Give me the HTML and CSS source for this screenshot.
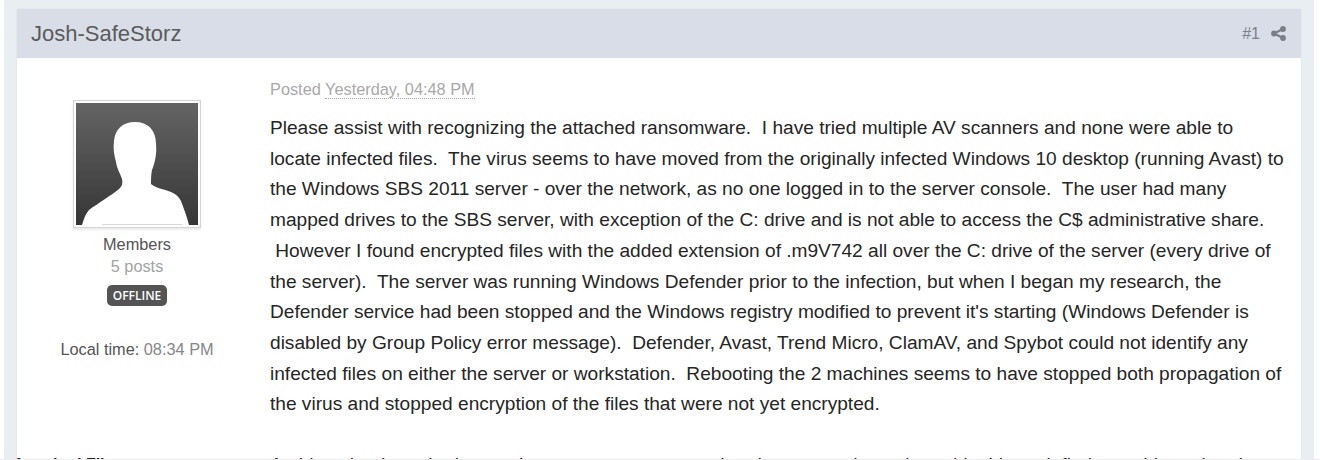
FILE: index.html
```html
<!DOCTYPE html>
<html lang="en">
<head>
<meta charset="utf-8">
<title>Josh-SafeStorz</title>
<link rel="stylesheet" href="styles.css">
</head>
<body>
<div class="page">
  <article class="post">
    <header class="post-head">
      <h3 class="author">Josh-SafeStorz</h3>
      <div class="post-tools">
        <span class="post-num">#1</span>
        <svg class="share" viewBox="0 0 16 16" aria-hidden="true"><circle cx="12.8" cy="3.2" r="3.1"/><circle cx="3.2" cy="8" r="3.1"/><circle cx="12.8" cy="12.8" r="3.1"/><path d="M3.2 8L12.8 3.2M3.2 8l9.6 4.8" class="share-line"/></svg>
      </div>
    </header>
    <div class="post-body">
      <aside class="member">
        <div class="avatar">
          <svg viewBox="0 0 122 122" aria-hidden="true">
            <defs><linearGradient id="ag" x1="0" y1="0" x2="0" y2="1"><stop offset="0" stop-color="#646464"/><stop offset="1" stop-color="#363636"/></linearGradient></defs>
            <rect width="122" height="122" fill="url(#ag)"/>
            <path d="M6 122C8 115 10 110 13 107C18 103 22 101 26 98C33 93 40 89 44 85C46 83 47 80 46 76C44 70 41 66 40 59C38 52 37 45 38 38C39 26 47 19 59 19C72 19 80 27 80 41C81 50 79 60 76 67C75 72 75 76 75 81C79 85 88 86 95 89C100 91 103 94 105 98C108 106 111 114 113 122Z" fill="#fff"/>
            <path d="M26 121.5H106" stroke="#d8d8d8" stroke-width="1"/>
          </svg>
        </div>
        <div class="group">Members</div>
        <div class="posts">5 posts</div>
        <span class="badge">OFFLINE</span>
        <div class="local">Local time: <span class="local-val">08:34 PM</span></div>
      </aside>
      <div class="content">
        <div class="posted">Posted <span class="posted-time">Yesterday, 04:48 PM</span></div>
        <p class="para">Please assist with recognizing the attached ransomware.&nbsp; I have tried multiple AV scanners and none were able to locate infected files.&nbsp; The virus seems to have moved from the originally infected Windows 10 desktop (running Avast) to the Windows SBS 2011 server - over the network, as no one logged in to the server console.&nbsp; The user had many mapped drives to the SBS server, with exception of the C: drive and is not able to access the C$ administrative share. &nbsp;However I found encrypted files with the added extension of .m9V742 all over the C: drive of the server (every drive of the server).&nbsp; The server was running Windows Defender prior to the infection, but when I began my research, the Defender service had been stopped and the Windows registry modified to prevent it's starting (Windows Defender is disabled by Group Policy error message).&nbsp; Defender, Avast, Trend Micro, ClamAV, and Spybot could not identify any infected files on either the server or workstation.&nbsp; Rebooting the 2 machines seems to have stopped both propagation of the virus and stopped encryption of the files that were not yet encrypted.</p>
        <p class="para next">At this point, I am the hunter. I want to try a program that the ransom host about this, I hope it finds anything related to</p>
      </div>
    </div>
  </article>
  <div class="cut-label">Attached Files</div>
</div>
<div class="bottom-line"></div>
</body>
</html>
```
FILE: styles.css
```css
html, body { margin: 0; padding: 0; background: #fff; }
body { height: 460px; overflow: hidden; font-family: "Liberation Sans", Arial, sans-serif; }
.page { position: relative; margin-left: 4px; width: 1310px; height: 459px; box-sizing: border-box; padding: 9px 13px 0; background: #e9eef3; overflow: hidden; }
.bottom-line { height: 1px; background: #eeeeee; }
.post { background: #fff; height: 600px; box-shadow: 0 0 1px rgba(0,0,0,.12); }
.post-head { display: flex; justify-content: space-between; align-items: center; height: 49px; box-sizing: border-box; padding: 0 15px 0 14px; background: #d8dde8; }
.author { margin: 0; font-size: 22px; font-weight: 400; color: #5b5b5b; }
.post-tools { display: flex; align-items: center; gap: 11px; }
.post-num { font-size: 16px; color: #7b8089; }
.share { width: 15px; height: 15px; fill: #7a7f87; }
.share-line { stroke: #7a7f87; stroke-width: 2.2; fill: none; }
.post-body { display: flex; }
.member { width: 240px; flex: none; display: flex; flex-direction: column; align-items: center; padding-top: 42px; font-size: 16.32px; line-height: 22px; }
.avatar { width: 122px; height: 122px; padding: 2px; border: 1px solid #d5d5d5; background: #fff; box-shadow: 0 2px 2px rgba(0,0,0,.08); margin-bottom: 5px; }
.avatar svg { display: block; width: 122px; height: 122px; }
.group { color: #555; }
.posts { color: #a3a3a3; }
.badge { margin-top: 8px; padding: 0 6px; height: 21px; line-height: 21px; border-radius: 5px; background: #545454; color: #fff; font-family: "Open Sans", "Liberation Sans", sans-serif; font-size: 12px; font-weight: 600; }
.local { margin-top: 32px; color: #555; }
.local-val { color: #85878a; }
.content { flex: 1; padding: 21px 15px 0 13px; }
.posted { font-size: 16.32px; line-height: 20px; color: #a9a9a9; margin-bottom: 14px; }
.posted-time { border-bottom: 1px dotted #a9a9a9; }
.para { margin: 0; font-size: 19.12px; line-height: 30.72px; color: #262626; }
.next { margin-top: 29.4px; }
.cut-label { position: absolute; left: 9px; top: 456px; font-size: 16px; line-height: 18px; font-weight: 700; color: #222; }
```
